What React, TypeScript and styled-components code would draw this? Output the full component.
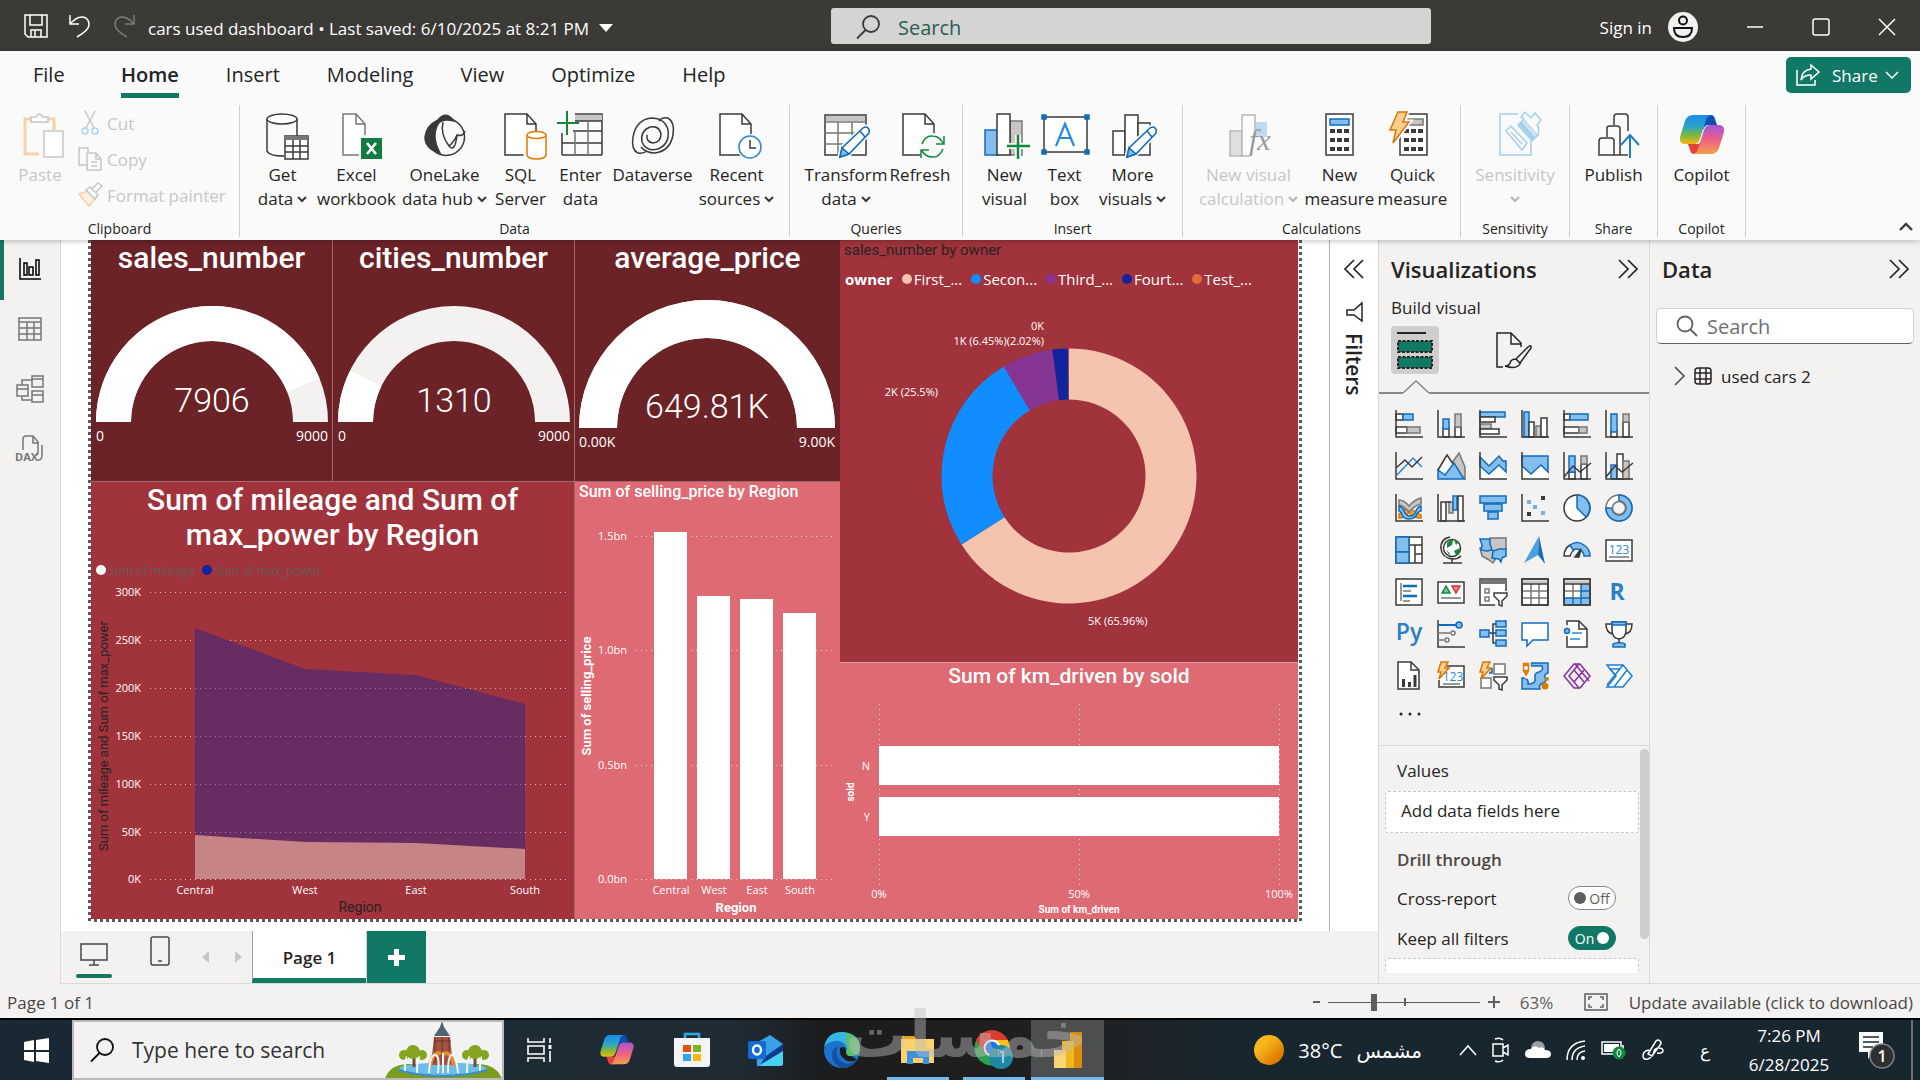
import React from "react";
import styled, { createGlobalStyle, css } from "styled-components";

const ui = `"Open Sans", "Noto Sans", "DejaVu Sans", sans-serif`;
const din = `Roboto, "Open Sans", sans-serif`;
const INK = "#3b3a39";
const BLUE = "#0f6cbd";
const SKY = "#83beec";
const GREY = "#797775";
const SILVER = "#c8c6c4";
const GREEN = "#117865";

const Global = createGlobalStyle`
  *, *::before, *::after { box-sizing: border-box; }
  html, body, #root { height: 100%; }
  body { margin: 0; overflow: hidden; background: #f3f2f1; font-family: ${ui}; font-size: 17px; color: #252423; }
  button, input { font: inherit; color: inherit; }
  button { border: 0; padding: 0; background: none; cursor: pointer; }
  h2, h3, p, ul { margin: 0; padding: 0; font-weight: inherit; font-size: inherit; }
  svg { display: block; overflow: visible; flex: none; }
`;

/* ---------- shell ---------- */
const Shell = styled.div`
  position: relative;
  display: flex;
  flex-direction: column;
  height: 100vh;
`;
const TitleBar = styled.header`
  display: grid;
  grid-template-columns: 831fr 600fr 489fr;
  align-items: center;
  height: 51px;
  flex: none;
  background: #3b3a37;
  color: #fff;
`;
const TitleLeft = styled.div`
  display: flex;
  align-items: center;
  padding-left: 24px;
  gap: 20px;
  white-space: nowrap;
`;
const IconButton = styled.button`
  display: grid;
  place-items: center;
  flex: none;
`;
const FileName = styled.button`
  display: flex;
  align-items: center;
  gap: 10px;
  margin-left: -8px;
  padding-top: 5px;
`;
const TopSearch = styled.label`
  display: flex;
  align-items: center;
  height: 36px;
  padding: 2px 0 0 25px;
  gap: 18px;
  margin-top: 1px;
  border-radius: 3px;
  background: #d4d4d2;
`;
const SearchInput = styled.input<{ $tone: string }>`
  flex: 1;
  min-width: 0;
  height: 34px;
  padding: 0;
  border: 0;
  outline: 0;
  background: transparent;
  font-size: 20px;
  color: ${(p) => p.$tone};
  &::placeholder { color: ${(p) => p.$tone}; opacity: 1; }
`;
const TitleRight = styled.div`
  display: flex;
  align-items: center;
  justify-content: flex-end;
  padding: 3px 24px 0 0;
  gap: 48px;
`;
const SignIn = styled.button`
  display: flex;
  align-items: center;
  gap: 16px;
`;

/* ---------- ribbon ---------- */
const Ribbon = styled.section`
  position: relative;
  z-index: 2;
  flex: none;
  height: 189px;
  background: #fafafa;
  box-shadow: 0 1px 6px rgba(0, 0, 0, 0.25);
`;
const TabRow = styled.nav`
  display: flex;
  align-items: flex-start;
  height: 54px;
  padding: 6px 9px 0 33px;
  gap: 47px;
`;
const Tab = styled.button<{ $active?: boolean; $first?: boolean }>`
  height: 41px;
  padding-bottom: 1px;
  border-bottom: 5px solid ${(p) => (p.$active ? GREEN : "transparent")};
  font-size: 20px;
  min-width: 41px;
  text-align: left;
  font-weight: ${(p) => (p.$active ? 600 : 400)};
`;
const ShareButton = styled.button`
  display: flex;
  align-items: center;
  height: 36px;
  width: 125px;
  margin-left: auto;
  padding-left: 10px;
  gap: 7px;
  border-radius: 5px;
  background: ${GREEN};
  color: #fff;
  svg:first-child { margin-right: 5px; }
`;
const Groups = styled.div`
  display: flex;
  height: 132px;
`;
const Group = styled.div<{ $w: number }>`
  display: flex;
  flex-direction: column;
  width: ${(p) => p.$w}px;
  border-right: 1px solid #d2d0ce;
`;
const GroupBody = styled.div<{ $start?: boolean }>`
  flex: 1;
  display: flex;
  justify-content: ${(p) => (p.$start ? "flex-start" : "center")};
  padding: 6px 0 0 ${(p) => (p.$start ? 2 : 0)}px;
`;
const GroupLabel = styled.div`
  height: 19px;
  margin-bottom: -1px;
  line-height: 19px;
  font-size: 14px;
  text-align: center;
`;
const BigButton = styled.button<{ $w: number; $off?: boolean }>`
  display: flex;
  flex-direction: column;
  align-items: center;
  width: ${(p) => p.$w}px;
  line-height: 24px;
  white-space: nowrap;
  gap: 4px;
  ${(p) => p.$off && css`color: #c8c6c4;`}
`;
const LabelLine = styled.span`
  display: flex;
  align-items: center;
  justify-content: center;
  gap: 4px;
  min-height: 24px;
`;
const SmallStack = styled.div`
  display: flex;
  flex-direction: column;
  color: #c8c6c4;
`;
const SmallButton = styled.button`
  display: flex;
  align-items: center;
  height: 36px;
  gap: 5px;
  margin-top: -6px;
  margin-bottom: 6px;
  white-space: nowrap;
`;
const Collapse = styled.button`
  margin-left: auto;
  align-self: flex-end;
  padding: 0 7px 6px 0;
`;

/* ---------- workspace ---------- */
const Workspace = styled.main`
  display: flex;
  flex: 1;
  min-height: 0;
`;
const Rail = styled.nav`
  width: 61px;
  flex: none;
  display: flex;
  flex-direction: column;
  border-right: 1px solid #dcdad8;
`;
const RailButton = styled.button<{ $active?: boolean }>`
  height: 60px;
  display: grid;
  place-items: center;
  padding: 0 5px 2px 0;
  border-left: 4px solid ${(p) => (p.$active ? GREEN : "transparent")};
`;
const Center = styled.div`
  flex: 1;
  min-width: 0;
  display: flex;
  flex-direction: column;
`;
const CanvasRow = styled.div`
  display: flex;
  flex: 1;
  min-height: 0;
  background: #fff;
`;
const CanvasArea = styled.div`
  flex: 1;
  min-width: 0;
  padding: 0 27px 9px 27px;
`;
const dots = (dir: string) => `repeating-linear-gradient(${dir}, #5c5a58 0 3px, #fff 3px 6px)`;
const Page = styled.div`
  display: grid;
  grid-template-columns: 749fr 458fr;
  height: 100%;
  padding: 0 4px 3px 3px;
  background:
    ${dots("to bottom")} left / 3px 100% no-repeat,
    ${dots("to bottom")} right / 3px 100% no-repeat,
    ${dots("to right")} bottom / 100% 3px no-repeat;
`;
const LeftTiles = styled.div`
  display: grid;
  grid-template-columns: 241fr 241fr 265fr;
  grid-template-rows: 241fr 437fr;
  gap: 1px;
  min-height: 0;
  background: #a5686c;
`;
const RightTiles = styled.div`
  display: grid;
  grid-template-rows: 422fr 256fr;
  gap: 1px;
  min-height: 0;
  background: #d99aa0;
`;
const Tile = styled.section<{ $bg: string; $wide?: boolean }>`
  display: flex;
  flex-direction: column;
  min-width: 0;
  min-height: 0;
  overflow: hidden;
  background: ${(p) => p.$bg};
  color: #fff;
  ${(p) => p.$wide && css`grid-column: span 2;`}
`;
const TileTitle = styled.h3<{ $size: number; $h: number; $left?: boolean; $dark?: boolean }>`
  flex: none;
  font-family: ${din};
  font-size: ${(p) => p.$size}px;
  line-height: ${(p) => p.$h}px;
  font-weight: ${(p) => (p.$dark ? 400 : 500)};
  text-align: ${(p) => (p.$left ? "left" : "center")};
  padding-left: ${(p) => (p.$left ? 4 : 0)}px;
  color: ${(p) => (p.$dark ? "#252423" : "#fff")};
  white-space: pre-line;
`;
const Legend = styled.ul<{ $h: number; $size: number; $tone: string; $gap: number }>`
  flex: none;
  display: flex;
  align-items: center;
  list-style: none;
  height: ${(p) => p.$h}px;
  gap: ${(p) => p.$gap}px;
  padding-left: 5px;
  font-size: ${(p) => p.$size}px;
  color: ${(p) => p.$tone};
  white-space: nowrap;
`;
const LegendItem = styled.li<{ $c?: string }>`
  display: flex;
  align-items: center;
  gap: 2px;
  ${(p) =>
    p.$c
      ? css`&::before { content: ""; width: 10px; height: 10px; border-radius: 50%; background: ${p.$c}; }`
      : css`font-weight: 700;`}
`;
const Chart = styled.svg`
  width: 100%;
  flex: 1 1 0;
  min-height: 0;
  font-family: ${ui};
  fill: #fff;
`;
const FiltersPane = styled.aside`
  width: 49px;
  flex: none;
  display: flex;
  flex-direction: column;
  align-items: center;
  padding-top: 19px;
  border-left: 1px solid #b3b0ad;
  gap: 23px;
`;
const FiltersTitle = styled.h2`
  margin-top: -12px;
  writing-mode: vertical-rl;
  font-size: 21px;
  line-height: 24px;
  font-weight: 600;
`;
const PageBar = styled.div`
  display: flex;
  height: 53px;
  flex: none;
  border-bottom: 1px solid #dcdad8;
`;
const PageIcon = styled.button<{ $w: number; $active?: boolean }>`
  display: flex;
  flex-direction: column;
  align-items: center;
  justify-content: flex-end;
  width: ${(p) => p.$w}px;
  padding-bottom: 5px;
  &::after {
    content: "";
    width: 36px;
    height: 4px;
    margin-top: 8px;
    border-radius: 2px;
    background: ${(p) => (p.$active ? GREEN : "transparent")};
  }
`;
const Arrows = styled.div`
  display: flex;
  align-items: center;
  gap: 26px;
  padding: 0 10px 0 9px;
`;
const PageTab = styled.button`
  width: 114px;
  padding-top: 6px;
  border-left: 1px solid #a19f9d;
  border-bottom: 5px solid ${GREEN};
  background: #fff;
  font-weight: 600;
`;
const AddPage = styled.button`
  display: grid;
  place-items: center;
  width: 60px;
  border-left: 1px solid #d2d0ce;
  background: ${GREEN};
`;

/* ---------- side panes ---------- */
const Pane = styled.aside<{ $w: number }>`
  width: ${(p) => p.$w}px;
  flex: none;
  display: flex;
  flex-direction: column;
  min-height: 0;
  border-left: 1px solid #dcdad8;
  border-bottom: 1px solid #dcdad8;
`;
const PaneHead = styled.div`
  display: flex;
  align-items: center;
  justify-content: space-between;
  height: 58px;
  padding: 0 11px 0 12px;
  h2 { font-size: 22px; font-weight: 600; }
`;
const SubHead = styled.p`
  padding-left: 12px;
  line-height: 20px;
  height: 28px;
  font-weight: 500;
`;
const ModeRow = styled.div`
  display: flex;
  gap: 51px;
  padding-left: 12px;
`;
const ModeButton = styled.button<{ $active?: boolean }>`
  width: 48px;
  height: 48px;
  display: grid;
  place-items: center;
  border-radius: 4px;
  background: ${(p) => (p.$active ? "#d0cecc" : "transparent")};
`;
const Notch = styled.div`
  display: flex;
  align-items: flex-end;
  height: 20px;
  &::before { content: ""; width: 24px; border-top: 2px solid #8a8886; }
  &::after { content: ""; flex: 1; border-top: 2px solid #8a8886; }
`;
const VizGrid = styled.div`
  display: grid;
  grid-template-columns: repeat(6, 42px);
  grid-auto-rows: 42px;
  padding: 9px 9px 0;
  place-items: center;
`;
const More = styled.button`
  width: 62px;
  height: 34px;
  display: grid;
  place-items: center;
`;
const Wells = styled.div`
  flex: 1;
  min-height: 0;
  display: flex;
  margin-top: 14px;
  border-top: 1px solid #dcdad8;
`;
const WellList = styled.div`
  flex: 1;
  min-width: 0;
  padding-left: 6px;
  height: 227px;
  overflow: hidden;
`;
const WellLabel = styled.p<{ $strong?: boolean }>`
  padding-left: 12px;
  line-height: 24px;
  margin-top: ${(p) => (p.$strong ? 15 : 13)}px;
  margin-bottom: ${(p) => (p.$strong ? 6 : 8)}px;
  font-weight: ${(p) => (p.$strong ? 600 : 400)};
  color: ${(p) => (p.$strong ? "#494745" : "#252423")};
`;
const DropBox = styled.div`
  height: 42px;
  padding-left: 15px;
  line-height: 38px;
  border: 1px dashed #c8c6c4;
  border-radius: 3px;
  background: #fff;
`;
const ToggleRow = styled.label`
  display: flex;
  align-items: center;
  justify-content: space-between;
  height: 40px;
  padding: 0 23px 0 12px;
`;
const Switch = styled.span<{ $on?: boolean }>`
  position: relative;
  display: flex;
  align-items: center;
  justify-content: center;
  flex-direction: ${(p) => (p.$on ? "row-reverse" : "row")};
  gap: 3px;
  width: 48px;
  height: 24px;
  border-radius: 12px;
  border: 1px solid ${(p) => (p.$on ? GREEN : "#8a8886")};
  background: ${(p) => (p.$on ? GREEN : "#fff")};
  color: ${(p) => (p.$on ? "#fff" : "#605e5c")};
  font-size: 14px;
  &::before { content: ""; width: 12px; height: 12px; border-radius: 50%; background: ${(p) => (p.$on ? "#fff" : "#605e5c")}; }
  input { position: absolute; inset: 0; margin: 0; opacity: 0; }
`;
const ScrollThumb = styled.div`
  width: 9px;
  height: 190px;
  margin: 3px 0 0 1px;
  border-radius: 5px;
  background: #d0cecc;
`;
const DataSearch = styled.label`
  display: flex;
  align-items: center;
  height: 36px;
  margin: 10px 6px 0 6px;
  padding-left: 18px;
  gap: 8px;
  border: 1px solid #d1d1d1;
  border-bottom-color: #616161;
  border-radius: 5px;
  background: #fff;
`;
const DataItem = styled.button`
  display: flex;
  align-items: center;
  height: 40px;
  margin-top: 12px;
  padding-left: 24px;
  gap: 9px;
`;

/* ---------- status bar ---------- */
const Status = styled.footer`
  display: flex;
  align-items: center;
  height: 36px;
  flex: none;
  padding: 2px 7px 0;
  border-bottom: 2px solid #000;
  color: #494745;
`;
const Zoom = styled.div`
  display: flex;
  align-items: center;
  margin-left: auto;
  gap: 6px;
`;
const Range = styled.input`
  appearance: none;
  width: 152px;
  height: 18px;
  margin: 0 2px;
  background:
    linear-gradient(#605e5c, #605e5c) 76px center / 2px 8px no-repeat,
    linear-gradient(#605e5c, #605e5c) center / 100% 1px no-repeat;
  &::-webkit-slider-thumb { appearance: none; width: 6px; height: 17px; background: #605e5c; }
`;
const ZoomText = styled.span`
  width: 36px;
  margin: 0 22px 0 14px;
  color: #605e5c;
`;
const UpdateLink = styled.a`
  margin-left: 21px;
  color: inherit;
  text-decoration: none;
`;

/* ---------- taskbar ---------- */
const Taskbar = styled.div`
  display: flex;
  height: 60px;
  flex: none;
  background: linear-gradient(90deg, #192833 0%, #1f2c36 38%, #1c1c1d 43%, #202020 56%, #182630 64%, #182630 100%);
  color: #fff;
`;
const StartButton = styled.button`
  width: 72px;
  display: grid;
  place-items: center;
`;
const TaskSearch = styled.label`
  display: flex;
  align-items: center;
  width: 432px;
  padding-left: 16px;
  gap: 18px;
  border: 2px solid #bcbab9;
  background: #f2f2f2;
  overflow: hidden;
  input { font-size: 21px; }
`;
const TaskApps = styled.div`
  display: flex;
`;
const TaskApp = styled.button<{ $w: number; $open?: boolean; $active?: boolean }>`
  display: grid;
  place-items: center;
  width: ${(p) => p.$w}px;
  ${(p) => p.$open && css`background: linear-gradient(#76b9ed, #76b9ed) center bottom / 62px 3px no-repeat;`}
  ${(p) => p.$active && css`background: linear-gradient(#76b9ed, #76b9ed) center bottom / 100% 3px no-repeat #4d4e4f;`}
`;
const Tray = styled.div`
  display: flex;
  align-items: center;
  margin-left: auto;
  padding-right: 7px;
`;
const Weather = styled.button`
  display: flex;
  align-items: center;
  gap: 14px;
  margin-right: 37px;
  font-size: 20px;
`;
const TrayIcons = styled.div`
  display: flex;
  align-items: center;
  gap: 15px;
`;
const Language = styled.button`
  width: 20px;
  margin: 0 28px 0 31px;
`;
const Clock = styled.button`
  width: 92px;
  line-height: 29px;
  text-align: center;
`;
const Notify = styled.button`
  margin-left: 24px;
  padding-right: 16px;
  border-right: 2px solid #6d7479;
  height: 60px;
`;
const Watermark = styled.div`
  position: absolute;
  left: 845px;
  bottom: 10px;
  z-index: 5;
  font-family: "DejaVu Sans", sans-serif;
  font-weight: 700;
  font-size: 64px;
  line-height: 70px;
  color: rgba(190, 190, 190, 0.45);
  pointer-events: none;
`;

/* ---------- small glyphs ---------- */
type SvgProps = { w: number; h?: number; vb?: string; children: React.ReactNode; c?: string; sw?: number; f?: string };
const G = ({ w, h = w, vb, children, c = INK, sw = 1.5, f = "none" }: SvgProps) => (
  <svg width={w} height={h} viewBox={vb || `0 0 ${w} ${h}`} fill={f} stroke={c} strokeWidth={sw} aria-hidden="true">
    {children}
  </svg>
);
const Chev = ({ c = INK }: { c?: string }) => (
  <G w={10} h={8} c={c} sw={2}><path d="M1 2l4 4 4-4" /></G>
);
const DoubleChev = ({ left }: { left?: boolean }) => (
  <G w={20} h={20} sw={1.7} c="#252423">
    {left ? <path d="M10 1L1 10l9 9M19 1l-9 9 9 9" /> : <path d="M1 1l9 9-9 9M10 1l9 9-9 9" />}
  </G>
);
const Lens = ({ c = INK, flip }: { c?: string; flip?: boolean }) => (
  <G w={24} c={c} sw={1.8}>
    {flip ? <><circle cx="10" cy="10" r="7.5" /><path d="M15.5 15.5L22 22" /></> : <><circle cx="15" cy="9" r="8" /><path d="M9.5 15L1 23.5" /></>}
  </G>
);

/* ---------- ribbon icons, drawn on a 48px square ---------- */
const doc = (x: number, w = 22) => `M${x} 3h${w - 9}l9 10v31h-${w}z M${x + w - 9} 3v10h9`;
const Pencil = () => (
  <g>
    <path d="M18 46l2-9 21-20q3-2 5 0t1 5L27 43z" fill="#fafafa" stroke="#fafafa" strokeWidth="5" />
    <path d="M18 46l2-9 21-20q3-2 5 0t1 5L27 43z" fill="#fff" stroke={BLUE} />
    <path d="M18 46l2-9 7 6z" fill={SKY} stroke={BLUE} />
    <path d="M38 20l5 6" stroke={BLUE} />
  </g>
);
const Bolt = () => <path d="M9 1h9l-4 10h6L4 32l3-13H1z" fill="#f9cf8f" stroke="#d97706" />;
const calc = (x: number) => (
  <>
    <rect x={x} y="3" width="27" height="41" fill="#fff" stroke={INK} />
    {[0, 1, 2].map((r) => [0, 1, 2].map((k) => <rect key={`${r}${k}`} x={x + 4 + k * 7} y={18 + r * 9} width="5" height="4" fill={INK} stroke="none" />))}
  </>
);
const CopilotMark = () => (
  <>
    <defs>
      <linearGradient id="cpA" x1="0" y1="0" x2="0" y2="1"><stop offset="0" stopColor="#1b8de8" /><stop offset=".4" stopColor="#2aa5c8" /><stop offset=".7" stopColor="#7db83c" /><stop offset="1" stopColor="#f5b516" /></linearGradient>
      <linearGradient id="cpB" x1="0" y1="0" x2="0" y2="1"><stop offset="0" stopColor="#a656d8" /><stop offset=".5" stopColor="#ee5f86" /><stop offset="1" stopColor="#f0a04a" /></linearGradient>
    </defs>
    <g stroke="none">
      <path d="M25 4h8q3 0 4 4l2 6h-9q-3 0-5 5z" fill="#0c4fb0" />
      <path d="M22 43h-6q-3 0-4-4l-2-6h9q4 0 5-5z" fill="#e0443c" />
      <path d="M15 4h18q-4 1-5 5l-6 19q-2 5-6 5H7q-6 0-5-7l5-16q2-6 8-6z" fill="url(#cpA)" />
      <path d="M33 43H15q4-1 5-5l6-19q2-5 6-5h9q6 0 5 7l-5 16q-2 6-8 6z" fill="url(#cpB)" />
    </g>
  </>
);
const icons: Record<string, React.ReactNode> = {
  get: <><path d="M8 8v32q2 5 17 5M38 8v19" /><ellipse cx="23" cy="8" rx="15" ry="5" fill="#fff" /><rect x="26" y="25" width="23" height="23" fill="#fff" /><path d="M26 27h23" strokeWidth="4" stroke={GREY} /><path d="M26 35h23M26 41h23M34 29v19M41 29v19" /></>,
  excel: <><path d="M31 3H10v41h19M23 3" stroke="none" /><path d="M32 24V13L23 3H10v41h16M23 3v10h9" stroke={GREY} fill="#fff" /><rect x="28" y="27" width="21" height="21" fill="#107c41" stroke="none" /><path d="M34 32l9 11M43 32l-9 11" stroke="#fff" strokeWidth="2.6" /></>,
  onelake: <><circle cx="25" cy="26" r="18.5" /><path d="M17 9q8-10 16 1-12-3-16 3Q10 26 19 42 4 38 4 26 5 15 17 9z" fill={INK} /><path d="M22 11q-3 12 6 24Q34 42 36 24q6 2 8-4M28 35q5-4 8-11" /></>,
  sql: <><path d={doc(8, 31)} fill="#fff" /><path d="M29 25v20q0 3 10 3t10-3V25" fill="#fff" stroke="#fafafa" strokeWidth="5" /><path d="M30 24v20q1 4 9.5 4t9.5-4V24" fill="#fff" stroke="#e07b00" /><ellipse cx="39.5" cy="24" rx="9.5" ry="3.5" fill="#fff" stroke="#e07b00" /></>,
  enter: <><path d="M5 44V22M45 44V3H18" /><rect x="18" y="4" width="27" height="6" fill={SILVER} stroke="none" /><path d="M5 44h40M5 32h40M16 20h29M18 10h27" /><path d="M18 20v24M31 10v34" stroke={GREY} /><path d="M10 0v24M0 12h22" stroke="#10893e" strokeWidth="2" /></>,
  dataverse: <><path d="M9 42Q2 39 4 26 7 9 22 7q14 0 17 12 2 14-10 19-12 3-16-7-2-11 8-15 9-2 11 7 0 8-8 9-7-1-6-8" /><path d="M39 7q7 4 5 17-3 16-18 18-9 0-14-6M9 42q5 1 9-2M39 7q-6-1-9 3" /></>,
  recent: <><path d={doc(7, 31)} fill="#fff" /><circle cx="37" cy="36" r="13" fill="#fafafa" stroke="none" /><circle cx="37" cy="36" r="11" fill="#fff" stroke="#2b88d8" /><path d="M37 29v8h6" /></>,
  transform: <><rect x="3" y="4" width="41" height="40" fill="#fff" /><rect x="4" y="5" width="39" height="5" fill={SILVER} stroke="none" /><path d="M3 11h41M3 22h41M3 33h25M16 11v33M30 11v22" stroke={GREY} /><Pencil /></>,
  refresh: <><path d={doc(7, 31)} fill="#fff" /><circle cx="36" cy="36" r="14" fill="#fafafa" stroke="none" /><path d="M26 33q3-9 11-8 6 0 10 7M48 25v8h-8M47 38q-4 9-11 8-6 0-10-6M25 47v-8h8" stroke="#10893e" /></>,
  newVisual: <><rect x="4" y="19" width="13" height="25" fill={SKY} stroke={BLUE} /><rect x="29" y="10" width="12" height="34" fill={SILVER} stroke={GREY} /><rect x="16" y="3" width="13" height="41" fill="#fff" /><path d="M37 24v24M26 35h23" stroke="#fafafa" strokeWidth="6" /><path d="M37 24v24M26 35h23" stroke="#10893e" strokeWidth="2.5" /></>,
  textBox: <><rect x="3" y="6" width="43" height="35" fill="#fff" /><path d="M15 35L24 13l9 22M18 27h12" stroke="#2b88d8" strokeWidth="2.2" />{[[3, 6], [46, 6], [3, 41], [46, 41]].map(([x, y]) => <rect key={`${x}${y}`} x={x - 2} y={y - 2} width="4" height="4" fill={BLUE} stroke={BLUE} />)}</>,
  moreVisuals: <><rect x="4" y="20" width="12" height="24" fill="#fff" /><rect x="16" y="4" width="13" height="40" fill="#fff" /><path d="M29 12h12v32H29z" fill="#fff" /><Pencil /></>,
  visCalc: <g opacity=".5"><rect x="5" y="20" width="12" height="25" fill={SILVER} stroke={GREY} /><rect x="29" y="11" width="13" height="15" fill={SKY} stroke="none" /><path d="M30 24V4H17v41h8" fill="#fff" stroke={GREY} /><text x="24" y="39" fontFamily="Liberation Serif, serif" fontStyle="italic" fontSize="30" fill={INK} stroke="none">fx</text></g>,
  measure: <>{calc(10)}<rect x="14" y="8" width="19" height="6" fill={SKY} stroke={BLUE} /></>,
  quick: <>{calc(11)}<rect x="19" y="8" width="15" height="6" fill={SILVER} stroke={GREY} /><path d="M9 1h9l-4 10h6L4 32l3-13H1z" fill="#fafafa" stroke="#fafafa" strokeWidth="5" /><Bolt /></>,
  sensitivity: <g stroke="#a3cfee"><path d="M27 3H9v41h31V30" /><path d="M27 14l6-6 14 16-6 6z" fill="#a3cfee" fillOpacity=".5" /><path d="M33 8l-3-2 4-5 6 6 4-5 6 7-4 5 2 3-1 7" fill="#fafafa" /><path d="M29 12l14 16" strokeWidth="4" /><path d="M15 20l5-5 16 17-5 7z" fill="#fafafa" /><path d="M20 21l11 12" /></g>,
  publish: <><path d="M9 44V30q0-3 3-3h9q3 0 3 3v14zM17 26V17q0-2 3-2h7q3 0 3 3v26M24 14V6q0-3 3-3h8q3 0 3 3v14M24 44h14" /><path d="M40 47V24M31 34l9-10 9 10" stroke="#1f7fc4" strokeWidth="2" /></>,
  copilot: <CopilotMark />,
};

type Cmd = { icon: string; w: number; a: string; b?: string; menu?: boolean; off?: boolean };
const groups: { name: string; w: number; items: Cmd[] }[] = [
  { name: "Data", w: 550, items: [
    { icon: "get", w: 64, a: "Get", b: "data", menu: true },
    { icon: "excel", w: 84, a: "Excel", b: "workbook" },
    { icon: "onelake", w: 92, a: "OneLake", b: "data hub", menu: true },
    { icon: "sql", w: 60, a: "SQL", b: "Server" },
    { icon: "enter", w: 60, a: "Enter", b: "data" },
    { icon: "dataverse", w: 84, a: "Dataverse" },
    { icon: "recent", w: 84, a: "Recent", b: "sources", menu: true },
  ] },
  { name: "Queries", w: 173, items: [
    { icon: "transform", w: 88, a: "Transform", b: "data", menu: true },
    { icon: "refresh", w: 60, a: "Refresh" },
  ] },
  { name: "Insert", w: 220, items: [
    { icon: "newVisual", w: 68, a: "New", b: "visual" },
    { icon: "textBox", w: 52, a: "Text", b: "box" },
    { icon: "moreVisuals", w: 84, a: "More", b: "visuals", menu: true },
  ] },
  { name: "Calculations", w: 278, items: [
    { icon: "visCalc", w: 110, a: "New visual", b: "calculation", menu: true, off: true },
    { icon: "measure", w: 72, a: "New", b: "measure" },
    { icon: "quick", w: 74, a: "Quick", b: "measure" },
  ] },
  { name: "Sensitivity", w: 109, items: [{ icon: "sensitivity", w: 90, a: "Sensitivity", b: "", menu: true, off: true }] },
  { name: "Share", w: 88, items: [{ icon: "publish", w: 76, a: "Publish" }] },
  { name: "Copilot", w: 88, items: [{ icon: "copilot", w: 76, a: "Copilot" }] },
];

/* ---------- visual gallery icons, drawn on a 28px square ---------- */
type Kind = "w" | "b" | "g";
const tone: Record<Kind, { fill: string; stroke: string }> = {
  w: { fill: "#fff", stroke: INK },
  b: { fill: SKY, stroke: BLUE },
  g: { fill: SILVER, stroke: GREY },
};
const R = ({ k, p }: { k: Kind; p: [number, number, number, number] }) => (
  <rect x={p[0]} y={p[1]} width={p[2]} height={p[3]} {...tone[k]} />
);
const axis = <path d="M1 0v27h27" />;
const card = <rect x="1" y="4" width="26" height="21" fill="#fff" />;
const num = (x: number, y: number, s: number) => (
  <text x={x} y={y} fontSize={s} fill="#2b88d8" stroke="none" textAnchor="middle">123</text>
);
const funnelSmall = <path d="M15 15h13v3l-5 5v5l-3-1v-4l-5-5z" fill="#fff" />;
const miniBolt = <path d="M4 0h7L8 6h4L2 17l2-7H1z" fill="#f9cf8f" stroke="#d97706" />;

const gallery: [string, React.ReactNode][] = [
  ["Stacked bar chart", <><R k="w" p={[1, 4, 7, 6]} /><R k="b" p={[8, 4, 10, 6]} /><R k="w" p={[1, 17, 11, 6]} /><R k="g" p={[12, 17, 13, 6]} />{axis}</>],
  ["Stacked column chart", <><R k="w" p={[6, 18, 6, 9]} /><R k="b" p={[6, 9, 6, 10]} /><R k="w" p={[18, 17, 6, 10]} /><R k="g" p={[18, 4, 6, 13]} />{axis}</>],
  ["Clustered bar chart", <><R k="b" p={[1, 2, 25, 5]} /><R k="w" p={[1, 7, 15, 5]} /><R k="g" p={[1, 14, 11, 5]} /><R k="w" p={[1, 19, 19, 5]} />{axis}</>],
  ["Clustered column chart", <><R k="b" p={[3, 2, 5, 25]} /><R k="w" p={[8, 12, 5, 15]} /><R k="g" p={[15, 16, 5, 11]} /><R k="w" p={[20, 8, 6, 19]} />{axis}</>],
  ["100% stacked bar chart", <><R k="w" p={[1, 4, 6, 6]} /><R k="b" p={[7, 4, 18, 6]} /><R k="w" p={[1, 17, 15, 6]} /><R k="g" p={[16, 17, 8, 6]} />{axis}</>],
  ["100% stacked column chart", <><R k="w" p={[6, 21, 6, 6]} /><R k="b" p={[6, 4, 6, 18]} /><R k="w" p={[18, 12, 6, 15]} /><R k="g" p={[18, 4, 6, 8]} />{axis}</>],
  ["Line chart", <><path d="M2 23L18 6l9 9" stroke="#2b88d8" /><path d="M1 16L10 8l7 7L27 5" />{axis}</>],
  ["Area chart", <><path d="M12 15L22 1l6 14v12z" fill={SILVER} stroke={GREY} /><path d="M1 18L10 3l9 13-8 11z" fill="#fff" /><path d="M1 18l7 5 9-12 10 16H1z" {...tone.b} /></>],
  ["Stacked area chart", <><path d="M1 14l9 8 10-9 7 7v7H1z" fill="#fff" stroke="none" /><path d="M1 5l9 9L20 4l4 5h3v11l-7-7-10 9-9-8z" {...tone.b} />{axis}</>],
  ["100% stacked area chart", <><path d="M1 14l9 8 10-9 7 7v7H1z" fill="#fff" stroke="none" /><path d="M1 4h26v16l-7-7-10 9-9-8z" {...tone.b} />{axis}</>],
  ["Line and stacked column chart", <><R k="w" p={[6, 20, 6, 7]} /><R k="b" p={[6, 4, 6, 16]} /><R k="w" p={[18, 12, 6, 15]} /><R k="g" p={[18, 4, 6, 8]} />{axis}<path d="M1 25l9-11 7 6L28 11" /></>],
  ["Line and clustered column chart", <><R k="b" p={[6, 13, 6, 14]} /><R k="w" p={[12, 2, 6, 25]} /><R k="g" p={[18, 9, 6, 18]} />{axis}<path d="M1 25l9-11 7 6L28 11" /></>],
  ["Ribbon chart", <><path d="M4 20q5-5 9-5t13 6v3q-8 0-12-6-4 6-10 6z" fill="#f9a53f" stroke="#d97706" /><path d="M4 6q5 0 10 6 5-6 12-8v6q-6 1-12 8-5-6-10-7z" fill={SILVER} stroke={GREY} /><path d="M4 12q3 0 5 5t6 5q4 0 6-5t5-5v5q-4 1-5 5-3 3-7 3-5 0-7-4-1-4-3-4z" {...tone.b} />{axis}</>],
  ["Waterfall chart", <><R k="w" p={[4, 8, 5, 19]} /><R k="g" p={[12, 8, 4, 11]} /><path d="M9 8h5M20 3h4" /><R k="b" p={[16, 2, 4, 14]} /><R k="w" p={[21, 2, 5, 25]} />{axis}</>],
  ["Funnel", <><R k="b" p={[1, 2, 26, 7]} /><R k="b" p={[5, 10, 18, 7]} /><R k="b" p={[9, 18, 10, 7]} /></>],
  ["Scatter chart", <><g stroke="none"><path d="M6 6h4v4H6zM12 11h4v4h-4zM20 17h4v4h-4z" fill="#6fb3e8" /><path d="M20 2h4v4h-4zM6 18h4v4H6z" fill={INK} /></g>{axis}</>],
  ["Pie chart", <><circle cx="14" cy="14" r="13" fill="#fff" /><path d="M14 1a13 13 0 0 1 9 22l-9-9z" {...tone.b} /></>],
  ["Donut chart", <><circle cx="14" cy="14" r="13" fill="#fff" stroke={GREY} /><path d="M14 1a13 13 0 1 1-13 13h6a7 7 0 1 0 7-7z" {...tone.b} /><circle cx="14" cy="14" r="6.5" fill="#f3f2f1" stroke={GREY} /></>],
  ["Treemap", <><R k="w" p={[1, 1, 26, 26]} /><path d="M14 9h13M14 1v26M20 9v18M20 18h7" /><R k="b" p={[1, 1, 13, 15]} /><R k="b" p={[1, 16, 13, 11]} /></>],
  ["Map", <><circle cx="15" cy="12" r="8.5" fill="#fff" /><path d="M10 7q4-4 6-3l-1 5-5 3zM17 15l6-3q0 5-4 7zM17 4l4 3-2 2zM9 13l4 5-1 1z" fill="#10893e" stroke="none" /><path d="M13 1Q3 3 4 13q1 9 12 10 5 0 8-3M15 23v4M6 27h19" /></>],
  ["Filled map", <><path d="M1 12l5-1 5-9h16v11l-4 8-6 1-3 5-4-3-7-4z" {...tone.g} /><path d="M1 3h10v5l2 6-5 1-6-1 1-5zM27 13v7l-4 2-1 4-2-3-7-1 1-7 6-2z" {...tone.b} /></>],
  ["Azure map", <g stroke="none"><path d="M18 0L3 27l14-8z" fill="#4ba0e0" /><path d="M18 0l6 28-7-9z" fill="#1b6fb5" /></g>],
  ["Gauge", <><path d="M1 20a13 13 0 0 1 6-11l4 5q-3 2-4 6z" fill="#fff" /><path d="M7 9q7-5 14 0 6 4 6 11h-6q0-4-4-6t-7 0z" {...tone.b} /><path d="M12 21l6-8-2 8z" fill={INK} /></>],
  ["Card", <>{card}{num(14, 18, 12)}<path d="M4 21h20" stroke={GREY} /></>],
  ["Multi-row card", <><R k="w" p={[1, 1, 26, 26]} /><path d="M6 5v18M8 13h8M8 23h7" stroke={GREY} /><path d="M8 8h14M8 18h14" stroke={BLUE} strokeWidth="2.5" /></>],
  ["KPI", <>{card}<path d="M5 15L9 8l4 7z" fill="#7cc28d" stroke="#10893e" /><path d="M15 8h8l-4 7z" fill="#f0898c" stroke="#d13438" /><path d="M4 20h20" stroke={GREY} /></>],
  ["Slicer", <><path d="M16 27H1V1h26v12" fill="#fff" /><path d="M1 4h26" stroke={GREY} strokeWidth="4" /><path d="M6 11h4v4H6zM6 19h4v4H6z" stroke={GREY} />{funnelSmall}</>],
  ["Table", <><R k="w" p={[1, 1, 26, 26]} /><path d="M1 13h26M1 20h26M10 6v21M18 6v21" stroke={GREY} /><path d="M1 4h26" stroke={SILVER} strokeWidth="3" /><path d="M1 6h26M1 1h26v26H1z" /></>],
  ["Matrix", <><R k="w" p={[1, 1, 26, 26]} /><path d="M2 20h16V6h8v20H2z" fill={SKY} stroke="none" /><path d="M1 13h17M10 6v14" stroke={GREY} /><path d="M18 13h9M1 20h26M10 20v7M18 6v21" stroke={BLUE} /><path d="M1 4h26" stroke={SILVER} strokeWidth="3" /><path d="M1 6h26M1 1h26v26H1z" /></>],
  ["R script visual", <text x="12" y="22" fontSize="23" fontWeight="700" fill="#2b7fc4" stroke="none" textAnchor="middle">R</text>],
  ["Python visual", <text x="14" y="20" fontSize="23" fontWeight="600" fill="#2b7fc4" stroke="none" textAnchor="middle">Py</text>],
  ["Key influencers", <>{axis}<path d="M1 5h18" stroke={BLUE} strokeWidth="2" /><circle cx="22" cy="5" r="3" {...tone.b} /><path d="M1 13h12M1 20h6" stroke={GREY} /><circle cx="16" cy="13" r="2" stroke={GREY} /><circle cx="10" cy="20" r="2" stroke={GREY} /></>],
  ["Decomposition tree", <><path d="M9 13h9M18 4h-4v19h4M14 13h4" /><R k="b" p={[1, 10, 9, 7]} /><R k="b" p={[17, 1, 10, 6]} /><R k="b" p={[17, 10, 10, 6]} /><R k="b" p={[17, 20, 10, 6]} /></>],
  ["Q&A", <path d="M1 3h26v17H12l-6 6v-6H1z" fill="#fff" stroke={BLUE} />],
  ["Smart narrative", <><path d="M4 5V1h12l8 8v18H4V16" fill="#fff" /><path d="M16 1v8h8" /><circle cx="4" cy="11" r="2.5" {...tone.b} /><path d="M9 13h10M7 19h10" stroke="#2b88d8" /></>],
  ["Metrics", <><path d="M7 2h14v8q0 8-7 9-7-1-7-9zM7 4H1q0 9 7 10M21 4h6q0 9-7 10" fill="#fff" /><path d="M7 2h14v3H7zM8 24q6-3 12 0v3H8z" {...tone.b} /><path d="M14 19v4" /></>],
  ["Paginated report", <><path d="M3 0h13l8 8v19H3z" fill="#fff" /><path d="M16 0v8h8" /><path d="M8.5 17v8M14.5 20v5M20 13v12" strokeWidth="3" /></>],
  ["Card (new)", <><path d="M10 4h17v21H2V18" fill="#fff" />{num(16, 19, 12)}<path d="M6 22h17" stroke={GREY} />{miniBolt}</>],
  ["Slicer (new)", <><path d="M15 2h11v10H15zM2 16h10v10H2zM15 16h8v8" fill="#fff" stroke={GREY} /><path d="M10 11h3V6" fill={SKY} stroke={BLUE} />{funnelSmall}{miniBolt}</>],
  ["ArcGIS maps", <><path d="M1 16v11h18q-2-4 3-6 4-1 2-6-1-3 3-4V1H10v3h11q2 4-3 6-5 1-4 6t-5 6H7q1-4-3-6z" fill={SKY} stroke={BLUE} /><circle cx="24" cy="24" r="3.5" fill="#e07b00" stroke="none" /><circle cx="26" cy="17" r="2" fill="#e07b00" stroke="none" /><path d="M1 0h8v9l-4 7-4-7z" fill="#e07b00" stroke="#f3f2f1" /><circle cx="5" cy="6" r="2" fill="#fff" stroke="none" /></>],
  ["Power Apps", <g stroke="#8a2da5"><path d="M11 2L1 14l10 12h6l10-12L17 2z" /><path d="M12 2l14 17M16 2l-5 6 5 6-5 6 5 6M11 8l-5 6 5 6M16 14l5-6M16 14l5 6" /></g>],
  ["Power Automate", <g stroke="#1a7fd4"><path d="M2 3h16l9 11-9 11H2l9-11z" fill="#fff" /><path d="M18 3L2 23M22 8L9 25M11 14L5 7h10" /></g>],
];

/* ---------- chart helpers ---------- */
const polar = (cx: number, cy: number, r: number, t: number) => `${cx + r * Math.sin(t * 2 * Math.PI)} ${cy - r * Math.cos(t * 2 * Math.PI)}`;
const ring = (cx: number, cy: number, ro: number, ri: number, a: number, b: number) => {
  const big = b - a > 0.5 ? 1 : 0;
  return `M${polar(cx, cy, ro, a)}A${ro} ${ro} 0 ${big} 1 ${polar(cx, cy, ro, b)}L${polar(cx, cy, ri, b)}A${ri} ${ri} 0 ${big} 0 ${polar(cx, cy, ri, a)}z`;
};
const Rotated = ({ x, y, s, c, b, children }: { x: number; y: number; s: number; c: string; b?: boolean; children: string }) => (
  <text transform={`translate(${x} ${y}) rotate(-90)`} textAnchor="middle" fontSize={s} fontFamily={din} fontWeight={b ? 700 : 400} fill={c}>{children}</text>
);
const grid = { stroke: "#fff", strokeOpacity: 0.7, strokeDasharray: "1 4", strokeWidth: 1 };

type GaugeProps = { title: string; x: number; w: number; cx: number; base: number; r: number; ri: number; share: number; value: string; min: string; max: string };
const GaugeTile = (g: GaugeProps) => (
  <Tile $bg="#6b2328">
    <TileTitle $size={30} $h={36}>{g.title}</TileTitle>
    <Chart viewBox={`${g.x} 276 ${g.w} 205`}>
      <path d={ring(g.cx, g.base, g.r, g.ri, -0.25, 0.25)} fill="#f3f2f1" />
      <path d={ring(g.cx, g.base, g.r, g.ri, -0.25, -0.25 + g.share / 2)} />
      <text x={g.cx} y={g.base - 10} textAnchor="middle" fontFamily={din} fontWeight="300" fontSize="34">{g.value}</text>
      <text x={g.cx - g.r} y={g.base + 19} fontSize="14">{g.min}</text>
      <text x={g.cx + g.r} y={g.base + 19} fontSize="14" textAnchor="end">{g.max}</text>
    </Chart>
  </Tile>
);

const regions = ["Central", "West", "East", "South"];
const areaX = [195, 305, 416, 525];
const AreaTile = () => (
  <Tile $bg="#a0333c" $wide>
    <TileTitle $size={30} $h={35}>{"Sum of mileage and Sum of\nmax_power by Region"}</TileTitle>
    <Legend $h={36} $size={12} $tone="#675b59" $gap={8}>
      <LegendItem $c="#fff">Sum of mileage</LegendItem>
      <LegendItem $c="#12239e">Sum of max_power</LegendItem>
    </Legend>
    <Chart viewBox="91 588 483 331">
      {["300K", "250K", "200K", "150K", "100K", "50K", "0K"].map((t, i) => (
        <g key={t}>
          <path d={`M150 ${592.5 + i * 48 - Math.floor(i / 6)}H567`} {...grid} />
          <text x="141" y={596 + i * 48 - Math.floor(i / 6)} fontSize="11" textAnchor="end">{t}</text>
        </g>
      ))}
      <path d="M195 628L305 669 416 675 525 704V849L416 843 305 842 195 835z" fill="#672d62" />
      <path d="M195 835L305 842 416 843 525 849V879H195z" fill="#c78486" />
      {[688.5, 736.5, 784.5, 832.5].map((y) => <path key={y} d={`M195 ${y}H525`} {...grid} stroke="#a5a5d4" />)}
      {regions.map((t, i) => <text key={t} x={areaX[i]} y="894" fontSize="11" textAnchor="middle">{t}</text>)}
      <text x="360" y="912" fontSize="14" fontFamily={din} textAnchor="middle" fill="#252423">Region</text>
      <Rotated x={108} y={736} s={13} c="#252423">Sum of mileage and Sum of max_power</Rotated>
    </Chart>
  </Tile>
);

const BarTile = () => (
  <Tile $bg="#de6a73">
    <TileTitle $size={16} $h={20} $left>Sum of selling_price by Region</TileTitle>
    <Chart viewBox="575 502 265 417">
      {["1.5bn", "1.0bn", "0.5bn", "0.0bn"].map((t, i) => (
        <g key={t}>
          <path d={`M636 ${536.5 + Math.round(i * 114.4)}H836`} {...grid} />
          <text x="627" y={540 + Math.round(i * 114.4)} fontSize="11" textAnchor="end">{t}</text>
        </g>
      ))}
      {[532, 596, 599, 613].map((y, i) => (
        <g key={y}>
          <rect x={654 + i * 43} y={y} width="33" height={879 - y} />
          <text x={671 + i * 43} y="894" fontSize="11" textAnchor="middle">{regions[i]}</text>
        </g>
      ))}
      <text x="736" y="912" fontSize="13" fontWeight="700" fontFamily={din} textAnchor="middle">Region</text>
      <Rotated x={591} y={696} s={13} c="#fff" b>Sum of selling_price</Rotated>
    </Chart>
  </Tile>
);

const owners: [string, string, number][] = [
  ["First_...", "#f4c4ae", 0.6596],
  ["Secon...", "#118dff", 0.255],
  ["Third_...", "#873592", 0.0645],
  ["Fourt...", "#12239e", 0.0202],
  ["Test_...", "#e66c37", 0.0007],
];
const DonutTile = () => {
  let at = 0;
  return (
    <Tile $bg="#a0333c">
      <TileTitle $size={15} $h={20} $left $dark>sales_number by owner</TileTitle>
      <Legend $h={38} $size={15} $tone="#fff" $gap={9}>
        <LegendItem>owner</LegendItem>
        {owners.map(([n, c]) => <LegendItem key={n} $c={c}>{n}</LegendItem>)}
      </Legend>
      <Chart viewBox="840 298 458 364">
        {owners.map(([n, c, v]) => {
          const d = ring(1069, 476, 127.5, 76.5, at, at + v);
          at += v;
          return <path key={n} d={d} fill={c} />;
        })}
        <path d="M942 391h12l10 9M1023 346l3 6M1048 333h10v14M1074 607v13h10" fill="none" stroke="#7a4a4d" strokeDasharray="2 1" />
        <g fontSize="11">
          <text x="1044" y="330" textAnchor="end">0K</text>
          <text x="1044" y="345" textAnchor="end">1K (6.45%)(2.02%)</text>
          <text x="938" y="396" textAnchor="end">2K (25.5%)</text>
          <text x="1088" y="625">5K (65.96%)</text>
        </g>
      </Chart>
    </Tile>
  );
};

const KmTile = () => (
  <Tile $bg="#de6a73">
    <TileTitle $size={21} $h={26}>Sum of km_driven by sold</TileTitle>
    <Chart viewBox="840 689 458 230">
      {["0%", "50%", "100%"].map((t, i) => (
        <g key={t}>
          <path d={`M${879.5 + i * 200} 704V885`} {...grid} />
          <text x={879 + i * 200} y="898" fontSize="11" textAnchor="middle">{t}</text>
        </g>
      ))}
      <rect x="879" y="746" width="400" height="39" />
      <rect x="879" y="797" width="400" height="39" />
      <text x="870" y="770" fontSize="11" textAnchor="end">N</text>
      <text x="870" y="821" fontSize="11" textAnchor="end">Y</text>
      <text x="1079" y="913" fontSize="10" fontWeight="700" fontFamily={din} textAnchor="middle">Sum of km_driven</text>
      <Rotated x={854} y={792} s={10} c="#fff" b>sold</Rotated>
    </Chart>
  </Tile>
);

/* ---------- taskbar drawings ---------- */
const Fountain = () => (
  <svg width="117" height="58" viewBox="0 0 117 58" aria-hidden="true">
    <path d="M0 58q4-14 22-15h72q18 1 23 15z" fill="#7c9c1d" />
    <path d="M14 47q8-5 40-5h22q20 1 26 5-4 8-44 8t-44-8z" fill="#6dbdec" />
    <path d="M14 49q20 6 44 6t44-6" stroke="#3a8cc9" strokeWidth="2" fill="none" />
    <path d="M49 16h16l3 28H46z" fill="#a3553f" />
    <path d="M49 20h17M50 16v26M57 16v26M64 16v26" stroke="#6e3428" strokeWidth="1" />
    <path d="M57 0l2 6 6 9H49l6-9z" fill="#50656f" />
    <path d="M45 45q3-16 11-12M69 45q-3-16-11-12" stroke="#e58a35" strokeWidth="4" fill="none" />
    <path d="M29 34v12M90 34v12" stroke="#7a4a2b" strokeWidth="3" />
    <g fill="#84a51f"><circle cx="19" cy="34" r="5" /><circle cx="28" cy="31" r="7" /><circle cx="37" cy="34" r="5" /><circle cx="82" cy="34" r="5" /><circle cx="90" cy="31" r="7" /><circle cx="99" cy="34" r="5" /></g>
    <path d="M20 50q0-14 2-14M32 52q0-16 3-16M44 52q1-18 6-18t3 18M58 52V32M63 52q0-18 4-18t6 18M82 52q0-16 3-16M95 50q0-14 2-14" stroke="#eef8ff" strokeWidth="2" fill="none" />
  </svg>
);
const taskApps: { n: string; w: number; open?: boolean; active?: boolean; d: React.ReactNode }[] = [
  { n: "Task view", w: 72, d: <G w={26} c="#fff" sw={1.6}><path d="M1 1v4h16V1M1 25v-4h16v4M1 9h16v8H1zM23 1v5M23 14v11" /><rect x="21.500" y="8" width="3" height="4" fill="#fff" stroke="none" /></G> },
  { n: "Copilot", w: 82, d: <G w={36} vb="0 0 48 48"><CopilotMark /></G> },
  { n: "Microsoft Store", w: 68, d: <G w={36} sw={0}><path d="M11 8V2h14v6" stroke="#29a8ea" strokeWidth="2.5" fill="none" /><path d="M0 6h36v26q0 3-3 3H3q-3 0-3-3z" fill="#f4f4f4" /><path d="M9 13h8v7H9z" fill="#e3511b" /><path d="M19 13h8v7h-8z" fill="#7ab51d" /><path d="M9 22h8v7H9z" fill="#29a8ea" /><path d="M19 22h8v7h-8z" fill="#fcb514" /></G> },
  { n: "Outlook", w: 80, d: <G w={36} h={32} sw={0}><path d="M8 9L22 1l13 9v20q0 2-3 2H9z" fill="#3aa0e8" /><path d="M35 10L18 22l-6 9 23-12z" fill="#123b8f" /><path d="M12 31l23-14v12q0 3-3 3H12z" fill="#45d3f5" /><rect x="0" y="7" width="18" height="18" rx="2" fill="#0f6cd0" /><ellipse cx="9" cy="16" rx="4" ry="4.5" fill="none" stroke="#fff" strokeWidth="2.5" /></G> },
  { n: "Microsoft Edge", w: 72, d: <G w={36} sw={0}><circle cx="18" cy="18" r="18" fill="#1a73cf" /><path d="M0 15Q3 0 18 0q17 1 18 15 0 9-9 9-6 0-5-4 2-3 0-6-4-6-11-5Q3 10 0 15z" fill="#35b6e6" /><path d="M22 1q13 3 14 14 0 9-9 9-6 0-5-4 3-4 0-8z" fill="#5bbf6b" /><path d="M14 14q-5 12 6 17 7 2 13-3-6 9-16 8Q7 31 8 22q1-6 6-8z" fill="#174f9f" /><path d="M16 16q6-3 6 4 0 5 6 4l5 4q-8 4-14-2-4-4-3-10z" fill="#1c1c1d" /></G> },
  { n: "File Explorer", w: 79, open: true, d: <G w={34} h={28} sw={0}><path d="M1 0h12l3 4H1z" fill="#e8a317" /><path d="M0 3h33v24H0z" fill="#fbd26b" /><path d="M6 28V15h22v13h-6v-6H12v6z" fill="#3a92dc" /></G> },
  { n: "Google Chrome", w: 74, open: true, d: <G w={40} sw={0}><circle cx="18" cy="18" r="17.5" fill="#2fa14f" /><path d="M2 10Q8 0 18 0q11 1 16 10H18z" fill="#db3b30" /><path d="M18 10h16q5 12-4 21L18 36l8-14z" fill="#fbc116" /><path d="M2 10l8 13 8-13z" fill="#db3b30" /><circle cx="18" cy="18" r="8.5" fill="#fff" /><circle cx="18" cy="18" r="6.5" fill="#1a73e8" /><circle cx="27" cy="27" r="12" fill="#1b8aa5" /><path d="M26 22h3v11" stroke="#9fd0dc" strokeWidth="2" fill="none" /></G> },
  { n: "Power BI", w: 73, open: true, active: true, d: <G w={28} h={36} sw={0}><path d="M16 0h12v36H16z" fill="#d98e0b" /><path d="M8 9h12v27H8z" fill="#f2b71c" /><path d="M0 18h12v18H0z" fill="#fbd476" /></G> },
];

export default function App() {
  return (
    <>
      <Global />
      <Shell>
        <TitleBar>
          <TitleLeft>
            <IconButton aria-label="Save"><G w={24} c="#fff"><path d="M1 1h22v22H4l-3-3zM6 1v10h12V1M7 23v-7h10v7M11 16v7" /></G></IconButton>
            <IconButton aria-label="Undo"><G w={24} c="#fff"><path d="M2 1v9h9M2 10Q9 2 15 3t6 8q0 5-12 12" /></G></IconButton>
            <IconButton aria-label="Redo"><G w={24} c="#7d7b79"><path d="M22 1v9h-9M22 10Q15 2 9 3t-6 8q0 5 12 12" /></G></IconButton>
            <FileName>cars used dashboard • Last saved: 6/10/2025 at 8:21 PM<G w={14} h={8} f="#fff" c="none"><path d="M0 0h14L7 8z" /></G></FileName>
          </TitleLeft>
          <TopSearch><Lens /><SearchInput $tone="#2b5c52" placeholder="Search" aria-label="Search" /></TopSearch>
          <TitleRight>
            <SignIn>Sign in<G w={30} c="none"><circle cx="15" cy="15" r="15" fill="#f3f2f1" /><circle cx="15" cy="8.5" r="4" stroke="#111" strokeWidth="2" /><path d="M6 16h18q0 9-9 9t-9-9z" stroke="#111" strokeWidth="2" /></G></SignIn>
            <IconButton aria-label="Minimize"><G w={18} c="#fff"><path d="M1 9h16" /></G></IconButton>
            <IconButton aria-label="Maximize"><G w={18} c="#fff"><rect x="1" y="1" width="16" height="16" rx="2" /></G></IconButton>
            <IconButton aria-label="Close"><G w={18} c="#fff"><path d="M1 1l16 16M17 1L1 17" /></G></IconButton>
          </TitleRight>
        </TitleBar>

        <Ribbon>
          <TabRow>
            {["File", "Home", "Insert", "Modeling", "View", "Optimize", "Help"].map((t) => <Tab key={t} $active={t === "Home"}>{t}</Tab>)}
            <ShareButton>
              <G w={24} h={22} c="#fff"><path d="M1 6v15h18v-5M15 1l8 7-8 7v-4q-7 0-10 5 1-10 10-11z" /></G>
              Share
              <G w={14} h={10} c="#fff"><path d="M1 2l6 6 6-6" /></G>
            </ShareButton>
          </TabRow>
          <Groups>
            <Group $w={240}>
              <GroupBody $start>
                <BigButton $w={76} $off>
                  <G w={48} c={SILVER}><path d="M17 8H9v35h14" stroke="#f5d3a6" strokeWidth="3" /><path d="M38 19V8h-9" stroke="#f5d3a6" strokeWidth="3" /><path d="M15 11V6h5q3-6 7 0h5v5z" fill="#fff" /><rect x="28" y="20" width="19" height="26" fill="#fff" /></G>
                  Paste
                </BigButton>
                <SmallStack>
                  <SmallButton><G w={24} c={SILVER}><path d="M7 0l9 17M17 0L8 17" /><circle cx="7" cy="20" r="3" stroke="#a9d3f2" /><circle cx="17" cy="20" r="3" stroke="#a9d3f2" /></G>Cut</SmallButton>
                  <SmallButton><G w={24} c={SILVER}><path d="M9 18H1V1h9v4M9 6h9l5 6v11H9zM18 6v6h5M13 15h6M13 19h6" /></G>Copy</SmallButton>
                  <SmallButton><G w={24} c={SILVER}><path d="M1 11l9-3 7 8-6 7z" stroke="#f5d3a6" fill="#fdf0de" /><path d="M8 7l4-3 8 8-3 4zM14 6l6-6 4 3-6 6" fill="#fff" /></G>Format painter</SmallButton>
                </SmallStack>
              </GroupBody>
              <GroupLabel>Clipboard</GroupLabel>
            </Group>
            {groups.map((g) => (
              <Group key={g.name} $w={g.w}>
                <GroupBody>
                  {g.items.map((c) => (
                    <BigButton key={c.icon} $w={c.w} $off={c.off}>
                      <G w={48}>{icons[c.icon]}</G>
                      <span>
                        <LabelLine>{c.a}</LabelLine>
                        {c.b !== undefined && <LabelLine>{c.b}{c.menu && <Chev c={c.off ? "#b8b6b4" : INK} />}</LabelLine>}
                      </span>
                    </BigButton>
                  ))}
                </GroupBody>
                <GroupLabel>{g.name}</GroupLabel>
              </Group>
            ))}
            <Collapse aria-label="Collapse ribbon"><G w={14} h={9} sw={2.4}><path d="M1 8l6-6 6 6" /></G></Collapse>
          </Groups>
        </Ribbon>

        <Workspace>
          <Rail>
            <RailButton $active aria-label="Report view"><G w={22} c="#000"><path d="M1 0v21h21M5 5h3v12H5zM10 9h4v8h-4zM17 2h3v15h-3z" /></G></RailButton>
            <RailButton aria-label="Table view"><G w={24} c={GREY}><path d="M1 1h22v22H1zM1 5h22M1 11h22M1 17h22M9 5v18M16 5v18" /></G></RailButton>
            <RailButton aria-label="Model view"><G w={28} c={GREY}><path d="M1 10h11v11H1zM1 14h11M16 1h11v11H16zM16 4h11M16 16h11v11H16zM16 20h11M6 10V5h10M6 21v4h10" /></G></RailButton>
            <RailButton aria-label="DAX query view"><G w={28} c={GREY}><path d="M7 15V4q0-3 3-3h7l5 6v10q0 3-2 3M17 1v7h6M26 10v10q0 5-4 5" /><text x="-1" y="26" fontSize="11" fontWeight="700" fill={GREY} stroke="none">DAX</text></G></RailButton>
          </Rail>

          <Center>
            <CanvasRow>
              <CanvasArea>
                <Page>
                  <LeftTiles>
                    <GaugeTile title="sales_number" x={91} w={241} cx={212} base={422} r={116} ri={81} share={0.878} value="7906" min="0" max="9000" />
                    <GaugeTile title="cities_number" x={333} w={241} cx={454} base={422} r={116} ri={81} share={0.146} value="1310" min="0" max="9000" />
                    <GaugeTile title="average_price" x={575} w={265} cx={707} base={428} r={128} ri={90} share={1} value="649.81K" min="0.00K" max="9.00K" />
                    <AreaTile />
                    <BarTile />
                  </LeftTiles>
                  <RightTiles>
                    <DonutTile />
                    <KmTile />
                  </RightTiles>
                </Page>
              </CanvasArea>
              <FiltersPane>
                <IconButton aria-label="Expand filters"><DoubleChev left /></IconButton>
                <G w={18} h={20} c="#252423"><path d="M17 1v18l-8-6H2V8h7z" /></G>
                <FiltersTitle>Filters</FiltersTitle>
              </FiltersPane>
            </CanvasRow>
            <PageBar>
              <PageIcon $w={65} $active aria-label="Desktop layout"><G w={28} h={23} c="#494745"><path d="M1 1h26v16H1zM14 17v5M9 22h10" /></G></PageIcon>
              <PageIcon $w={67} aria-label="Mobile layout"><G w={20} h={30} c="#494745"><rect x="1" y="1" width="18" height="28" rx="2" /><path d="M8 25h4" /></G></PageIcon>
              <Arrows>
                <IconButton aria-label="Previous page"><G w={7} h={12} f="#c8c6c4" c="none"><path d="M7 0v12L0 6z" /></G></IconButton>
                <IconButton aria-label="Next page"><G w={7} h={12} f="#c8c6c4" c="none"><path d="M0 0v12l7-6z" /></G></IconButton>
              </Arrows>
              <PageTab>Page 1</PageTab>
              <AddPage aria-label="New page"><G w={17} c="#fff" sw={5}><path d="M8.500 0v17M0 8.500h17" /></G></AddPage>
            </PageBar>
          </Center>

          <Pane $w={271}>
            <PaneHead><h2>Visualizations</h2><IconButton aria-label="Collapse visualizations"><DoubleChev /></IconButton></PaneHead>
            <SubHead>Build visual</SubHead>
            <ModeRow>
              <ModeButton $active aria-label="Build visual"><G w={36} h={37} c="#252423"><path d="M0 1h29" strokeWidth="2" /><rect x="1" y="9" width="34" height="11" fill={GREEN} strokeDasharray="3 1.500" strokeWidth="2" /><rect x="1" y="25" width="34" height="11" fill={GREEN} strokeDasharray="3 1.500" strokeWidth="2" /></G></ModeButton>
              <ModeButton aria-label="Format visual"><G w={36} c="#252423"><path d="M7 35H1V1h14l10 10v4M15 1v11h10" /><path d="M35 14q-1-1-3 1L20 27l4 4 11-15zM20 27q-5 0-6 4-1 3-5 3 9 3 13 0 3-2 2-4" fill="#f3f2f1" /></G></ModeButton>
            </ModeRow>
            <Notch><G w={26} h={14} c="#8a8886"><path d="M0 13l13-12 13 12" /></G></Notch>
            <VizGrid>
              {gallery.map(([n, d]) => <IconButton key={n} aria-label={n}><G w={28}>{d}</G></IconButton>)}
            </VizGrid>
            <More aria-label="More visuals"><G w={22} h={4} f="#252423" c="none"><circle cx="2" cy="2" r="1.5" /><circle cx="11" cy="2" r="1.5" /><circle cx="20" cy="2" r="1.5" /></G></More>
            <Wells>
              <WellList>
                <WellLabel>Values</WellLabel>
                <DropBox>Add data fields here</DropBox>
                <WellLabel $strong>Drill through</WellLabel>
                <ToggleRow>Cross-report<Switch><input type="checkbox" />Off</Switch></ToggleRow>
                <ToggleRow>Keep all filters<Switch $on><input type="checkbox" defaultChecked />On</Switch></ToggleRow>
                <DropBox />
              </WellList>
              <ScrollThumb />
            </Wells>
          </Pane>

          <Pane $w={271}>
            <PaneHead><h2>Data</h2><IconButton aria-label="Collapse data"><DoubleChev /></IconButton></PaneHead>
            <DataSearch><Lens flip c="#616161" /><SearchInput $tone="#707070" placeholder="Search" aria-label="Search fields" /></DataSearch>
            <DataItem>
              <G w={11} h={20} c="#494745"><path d="M1 1l9 9-9 9" /></G>
              <G w={18} c="#252423"><rect x="1" y="1" width="16" height="16" rx="3" /><path d="M1 6h16M1 12h16M6 1v16M12 1v16" /></G>
              used cars 2
            </DataItem>
          </Pane>
        </Workspace>

        <Status>
          <span>Page 1 of 1</span>
          <Zoom>
            <IconButton aria-label="Zoom out"><G w={7} h={4} c="#605e5c" sw={2}><path d="M0 2h7" /></G></IconButton>
            <Range type="range" min={10} max={190} defaultValue={63} aria-label="Zoom" />
            <IconButton aria-label="Zoom in"><G w={12} c="#605e5c" sw={2}><path d="M6 0v12M0 6h12" /></G></IconButton>
            <ZoomText>63%</ZoomText>
            <IconButton aria-label="Fit to page"><G w={24} h={18} c="#605e5c"><path d="M1 1h22v16H1z" /><path d="M5 7V4h3M16 4h3v3M19 11v3h-3M8 14H5v-3" /></G></IconButton>
          </Zoom>
          <UpdateLink href="#update">Update available (click to download)</UpdateLink>
        </Status>

        <Taskbar>
          <StartButton aria-label="Start"><G w={25} f="#fff" c="none"><path d="M0 4l10-2v10H0zM12 2l13-2v12H12zM0 14h10v10L0 22zM12 14h13v11l-13-2z" /></G></StartButton>
          <TaskSearch>
            <Lens c="#111" />
            <SearchInput $tone="#333" placeholder="Type here to search" aria-label="Windows search" />
            <Fountain />
          </TaskSearch>
          <TaskApps>
            {taskApps.map((a) => <TaskApp key={a.n} $w={a.w} $open={a.open} $active={a.active} aria-label={a.n}>{a.d}</TaskApp>)}
          </TaskApps>
          <Tray>
            <Weather>
              <G w={30} c="none"><defs><linearGradient id="sun" x1="0" y1="0" x2="1" y2="1"><stop offset=".3" stopColor="#f5b91c" /><stop offset=".8" stopColor="#e07b00" /></linearGradient></defs><circle cx="15" cy="15" r="15" fill="url(#sun)" /></G>
              <span>38°C</span>
              <span dir="rtl">مشمس</span>
            </Weather>
            <TrayIcons>
              <G w={18} h={12} c="#fff"><path d="M1 11l8-9 8 9" /></G>
              <G w={18} h={24} c="#fff"><path d="M1 6h10v12H1zM11 10l5-3v10l-5-3M3 1q5-2 8 1M3 23q5 2 8-1" /></G>
              <G w={26} h={18} c="none"><circle cx="13" cy="7" r="7" fill="#9aa0a4" /><path d="M5 17q-5 0-5-4 0-5 6-5 3-5 8-1 4-2 6 2 6 0 6 4t-5 4z" fill="#fff" /></G>
              <G w={20} h={20} c="#fff"><path d="M1 20Q1 3 19 1M6 20Q6 8 19 6M11 20q0-8 8-9" /><circle cx="17" cy="18" r="2" fill="#fff" stroke="none" /></G>
              <G w={26} h={20} c="#fff"><path d="M1 2h19v12H1zM22 5v5" /><path d="M3 4h15v8H3z" fill="#fff" stroke="none" /><circle cx="18" cy="13" r="6.5" fill="#10893e" stroke="none" /><path d="M18 9q4 4 0 8-4-4 0-8z" strokeWidth="1" /></G>
              <G w={22} h={22} c="#fff"><path d="M6 15L14 2q2-2 4 0t0 4L10 17zM7 11q-6 1-6 6 0 4 5 3 5-2 6-8 1-3 5-3t4 3q-1 3-6 2" /></G>
            </TrayIcons>
            <Language>ع</Language>
            <Clock>7:26 PM<br />6/28/2025</Clock>
            <Notify aria-label="Notifications, 1 new">
              <G w={36} h={38} c="none"><path d="M0 1h24v20H14l-5 7v-7H0z" fill="#fff" /><path d="M4 6h16M4 11h16M4 16h10" stroke="#182630" strokeWidth="1.5" /><circle cx="23" cy="25" r="12" fill="#2d2f31" stroke="#7f8386" /><text x="23" y="31" fontSize="16" fontWeight="600" fill="#fff" textAnchor="middle">1</text></G>
            </Notify>
          </Tray>
        </Taskbar>
        <Watermark dir="rtl" lang="ar">خمسات</Watermark>
      </Shell>
    </>
  );
}
